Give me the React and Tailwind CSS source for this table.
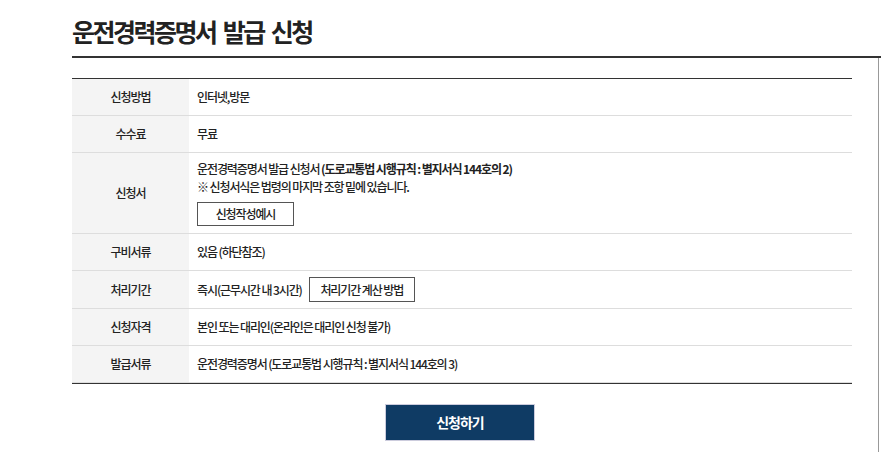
export default function App() {
  const font = { fontFamily: '"Noto Sans CJK KR", "Noto Sans", sans-serif' };
  const rows = [
    { label: "신청방법", content: <span>인터넷,방문</span> },
    { label: "수수료", content: <span>무료</span> },
  ];
  return (
    <div className="w-[881px] h-[452px] bg-white overflow-hidden text-[#222]" style={font}>
      <div className="pl-[72px] pt-[15px] h-[56px]">
        <h1 className="text-[25px] leading-[32px] font-bold tracking-[-2.5px] [word-spacing:4px] text-[#222]">운전경력증명서 발급 신청</h1>
      </div>
      <div className="ml-[72px] h-[2px] bg-[#333]" />
      <div className="mr-[2px] border-r border-[#999] pt-[20px] pb-[20px] h-[394px]">
        <div className="ml-[72px] w-[780px] border-t border-b border-[#333] text-[12px] tracking-[-1.1px] leading-[18px] font-medium">
          {rows.map((r) => (
            <div key={r.label} className="flex h-[37px] border-b border-[#ddd]">
              <div className="w-[117px] bg-[#f4f4f4] flex items-center justify-center">{r.label}</div>
              <div className="flex-1 pl-[8px] flex items-center">{r.content}</div>
            </div>
          ))}
          <div className="flex h-[81px] border-b border-[#ddd]">
            <div className="w-[117px] bg-[#f4f4f4] flex items-center justify-center">신청서</div>
            <div className="flex-1 pl-[8px] pt-[7px]">
              <div>
                운전경력증명서 발급 신청서 <b className="font-bold">(도로교통법 시행규칙 : 별지서식 144호의 2)</b>
              </div>
              <div>※ 신청서식은 법령의 마지막 조항 밑에 있습니다.</div>
              <div className="mt-[6px] w-[97px] h-[24px] border border-[#555] flex items-center justify-center">신청작성예시</div>
            </div>
          </div>
          <div className="flex h-[37px] border-b border-[#ddd]">
            <div className="w-[117px] bg-[#f4f4f4] flex items-center justify-center">구비서류</div>
            <div className="flex-1 pl-[8px] flex items-center">있음 (하단참조)</div>
          </div>
          <div className="flex h-[38px] border-b border-[#ddd]">
            <div className="w-[117px] bg-[#f4f4f4] flex items-center justify-center">처리기간</div>
            <div className="flex-1 pl-[8px] flex items-center">
              <span>즉시(근무시간 내 3시간)</span>
              <span className="ml-[7px] w-[106px] h-[25px] border border-[#555] flex items-center justify-center">처리기간 계산 방법</span>
            </div>
          </div>
          <div className="flex h-[37px] border-b border-[#ddd]">
            <div className="w-[117px] bg-[#f4f4f4] flex items-center justify-center">신청자격</div>
            <div className="flex-1 pl-[8px] flex items-center">본인 또는 대리인(온라인은 대리인 신청 불가)</div>
          </div>
          <div className="flex h-[37px] border-b border-[#ddd]">
            <div className="w-[117px] bg-[#f4f4f4] flex items-center justify-center">발급서류</div>
            <div className="flex-1 pl-[8px] flex items-center">운전경력증명서 (도로교통법 시행규칙 : 별지서식 144호의 3)</div>
          </div>
        </div>
        <div className="ml-[385px] mt-[20px] w-[150px] h-[37px] bg-[#0f3b64] border border-[#ccd] flex items-center justify-center text-white text-[14px] font-bold tracking-[-1px]">
          신청하기
        </div>
      </div>
    </div>
  );
}
